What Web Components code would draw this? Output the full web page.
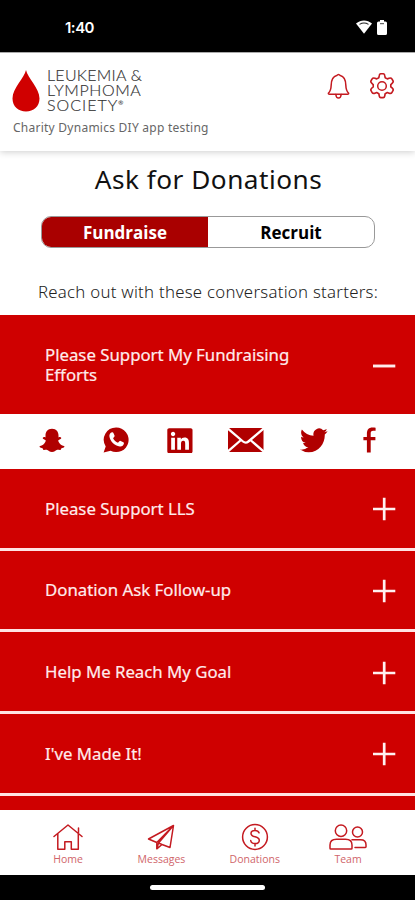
<!DOCTYPE html>
<html lang="en"><head><meta charset="utf-8"><title>Ask for Donations</title>
<style>
html,body{margin:0;padding:0;background:#fff}
body{width:415px;height:900px;overflow:hidden;font-family:"Noto Sans","Open Sans",sans-serif}
</style></head><body>
<donation-app></donation-app>
<script>
const define=(name,html)=>customElements.define(name,class extends HTMLElement{
  constructor(){super();this.attachShadow({mode:'open'}).innerHTML=html;}
});
const line='fill="none" stroke="#c41a20" stroke-width="1.5" stroke-linejoin="round" stroke-linecap="round"';
const icons={
drop:[28,42,'<path fill="#d00000" d="M14 0C15.500 8 27.500 18 27.500 28.500C27.500 36.500 21.500 41.500 14 41.500S.5 36.500.5 28.500C.5 18 12.500 8 14 0Z"/>'],
wifi:[16,14,'<path fill="#fff" d="M0 3.500C5-.5 11-.5 16 3.500L8 13.800Z"/><path d="M3.500 4.400Q8 1.700 12.500 4.400" fill="none" stroke="#222" stroke-width="1.100"/>'],
battery:[10,15,'<path fill="#fff" d="M3 0h4v1.500h1.500q1.500 0 1.500 1.500v10.500q0 1.500-1.500 1.500h-7Q0 15 0 13.500V3q0-1.500 1.500-1.500H3Z"/><path d="M3 3.700h4" stroke="#444" stroke-width="1"/>'],
bell:[23,26,`<g ${line}><path d="M1.300 20.300Q4 17.800 4.200 12C4.400 6.500 6.500 3.400 9.700 2.600Q11.500.2 13.300 2.600C16.500 3.400 18.600 6.500 18.800 12Q19 17.800 21.700 20.300Q21.700 21.300 20.700 21.300H2.300Q1.300 21.300 1.300 20.300Z"/><path d="M8.800 21.500Q9.200 25 11.500 25T14.200 21.500"/></g>`],
gear:[26,26,`<g ${line}><path d="M10.400 3Q10.600 1 12 1h2q1.400 0 1.600 2l.3 1.600 2 1.100 1.600-.6q1.900-.6 2.600.6l1 1.700q.7 1.200-.8 2.500l-1.200 1v2.200l1.200 1q1.500 1.300.8 2.500l-1 1.700q-.7 1.200-2.600.6l-1.600-.6-2 1.100-.3 1.600q-.2 2-1.600 2h-2q-1.400 0-1.600-2l-.3-1.600-2-1.100-1.600.6q-1.900.6-2.600-.6l-1-1.700q-.7-1.200.8-2.500l1.200-1v-2.200l-1.200-1q-1.500-1.300-.8-2.500l1-1.700q.7-1.200 2.600-.6l1.600.6 2-1.100Z" transform="translate(-1.100 -.3) scale(1.085)"/><circle cx="13" cy="13" r="4.300"/></g>`],
snap:[26,25,'<path fill="#b00000" d="M13 .8c4.500 0 6.500 3.200 6.500 6.600v2c1-.4 2.300-.5 2.700.3.500 1-1.300 1.600-2.500 2.300-.6.400-.5 1 0 2 1.200 2.200 3 3.500 5.200 4 .8.200.8 1-.1 1.400-1 .5-2.100.7-2.500 1-.5.400-.2 1.300-.9 1.500-1 .2-2.300-.4-3.700 0-1.300.4-2.300 2-4.700 2s-3.400-1.600-4.700-2c-1.400-.4-2.700.2-3.700 0-.7-.2-.4-1.100-.9-1.500-.4-.3-1.500-.5-2.500-1-.9-.4-.9-1.200-.1-1.400 2.200-.5 4-1.800 5.200-4 .5-1 .6-1.600 0-2-1.200-.7-3-1.300-2.500-2.300.4-.8 1.700-.7 2.700-.3v-2C6.500 4 8.500.8 13 .8Z"/>'],
whatsapp:[26,26,'<path fill="#b00000" d="M13.200.5a12.300 12.300 0 1 1-5.600 23.200L.6 25.500l2.100-6.100A12.300 12.300 0 0 1 13.200.5Z"/><path fill="#fff" transform="translate(3.200 2.300) scale(.86)" d="M6.800 3.500q1-.5 1.600.7l1.300 3q.3.900-.3 1.500L8 10.300c1.200 2.400 3.200 4.300 5.700 5.400l1.600-1.800q.7-.8 1.500-.3l3.100 1.500q1 .5.700 1.500c-.5 2.400-2.500 3.700-4.700 3.400C9.600 19.200 4.400 14 3.700 8.200 3.500 6 4.700 4.200 6.800 3.500Z"/>'],
linkedin:[26,25,'<path fill="#b00000" transform="translate(.3 -1.600) scale(.0563)" d="M416 32H31.900C14.300 32 0 46.500 0 64.300v383.400C0 465.500 14.300 480 31.900 480H416c17.600 0 32-14.500 32-32.300V64.300c0-17.800-14.400-32.300-32-32.300zM135.400 416H69V202.200h66.500V416zm-33.200-243c-21.300 0-38.500-17.300-38.500-38.500S80.900 96 102.200 96c21.200 0 38.500 17.300 38.500 38.500 0 21.300-17.200 38.500-38.500 38.500zm282.100 243h-66.400V312c0-24.800-.5-56.700-34.500-56.700-34.600 0-39.900 27-39.900 54.900V416h-66.400V202.200h63.700v29.200h.9c8.900-16.800 30.600-34.500 62.900-34.500 67.200 0 79.700 44.300 79.700 101.900V416z"/>'],
mail:[36,24,'<path fill="#b00000" d="M0 0h35.500v24H0Z"/><path d="M-.5 .2L15 13.500Q17.700 15.800 20.400 13.500L36 .2M-.5 23.800L13 12M36 23.800L22.400 12" fill="none" stroke="#fff" stroke-width="2.300"/>'],
twitter:[28,25,'<path fill="#b00000" transform="translate(0 -2.300) scale(1.150 1.220)" d="M23.953 4.570a10 10 0 01-2.825.775 4.958 4.958 0 002.163-2.723c-.951.555-2.005.959-3.127 1.184a4.920 4.920 0 00-8.384 4.482C7.690 8.095 4.067 6.130 1.640 3.162a4.822 4.822 0 00-.666 2.475c0 1.710.87 3.213 2.188 4.096a4.904 4.904 0 01-2.228-.616v.06a4.923 4.923 0 003.946 4.827 4.996 4.996 0 01-2.212.085 4.936 4.936 0 004.604 3.417 9.867 9.867 0 01-6.102 2.105c-.39 0-.779-.023-1.170-.067a13.995 13.995 0 007.557 2.209c9.053 0 13.998-7.496 13.998-13.985 0-.21 0-.42-.015-.63A9.935 9.935 0 0024 4.590z"/>'],
facebook:[13,26,'<path fill="#b00000" d="M3.900 25.500V13.200H.4V10h3.500V6.600C3.900 2.500 6 .5 9.300.5c1.500 0 2.500.1 3.300.3v3H10.200c-1.900 0-2.500 1-2.500 2.700V10h4.700v3.200H7.700v12.300Z"/>'],
plus:[24,24,'<path d="M1 12h22.300M12.200 .8v22.500" stroke="#fff1f1" stroke-width="2.700"/>'],
minus:[24,24,'<path d="M1 12h22.300" stroke="#ffecec" stroke-width="2.900"/>'],
home:[30,26,`<g ${line}><path d="M1 12.500L15 1l14 11.500M4.800 9.800v15.400h7v-7.500h6.500v7.500h7V9.800M25.500 4v4.500"/></g>`],
messages:[28,26,`<g ${line}><path d="M1.500 15L26.500 1.500 23 23.500 15 20.500 9.800 24.800V18.500ZM9.800 18.500L26.500 1.500 11.500 19 15 20.500M11.500 19L9.800 24.800"/></g>`],
donations:[28,28,`<g ${line}><circle cx="14" cy="14" r="12.400"/><path d="M18 9.800C17.500 8 16 7.400 14 7.400c-2.300 0-4 1.200-4 3 0 4.500 8.300 2.300 8.300 6.800 0 2.200-1.800 3.400-4.300 3.400S10 19.700 9.700 17.500M14 5.300v2.100M14 20.600v2.300"/></g>`],
team:[38,26,`<g ${line}><circle cx="12" cy="6.800" r="5.700"/><circle cx="28.500" cy="8" r="5"/><path d="M1 24.200V21C1 17 4 15.300 7.500 15.300h9c3.500 0 6.500 1.700 6.500 5.700v3.200q0 .8-.8.800H1.800Q1 25 1 24.200ZM23 15.800h8.500c3 0 5.500 1.700 5.500 5v2q0 .7-.7.700H26"/></g>`]
};
customElements.define('app-icon',class extends HTMLElement{
  connectedCallback(){const [w,h,p]=icons[this.getAttribute('name')];
  if(!this.shadowRoot)this.attachShadow({mode:'open'}).innerHTML=`<style>:host{display:block;flex:none;width:${w}px;height:${h}px}svg{display:block}</style><svg width="${w}" height="${h}" viewBox="0 0 ${w} ${h}">${p}</svg>`;}
});
define('status-bar',`<style>:host{display:flex;box-sizing:border-box;height:52px;background:#000;padding:20px 28px 0 65px;align-items:flex-start;color:#fff}
span{font:600 15px/16px Inter,sans-serif;letter-spacing:-.5px;flex:1}app-icon+app-icon{margin-left:5px}</style>
<span>1:40</span><app-icon name="wifi"></app-icon><app-icon name="battery"></app-icon>`);
define('app-header',`<style>:host{display:flex;box-sizing:border-box;height:99px;border-top:1px solid #aaa;padding:15px 20px 0 12px;background:#fff;box-shadow:0 1px 7px #0003;position:relative}
.brand{flex:1}.logo{display:flex;gap:7px;padding-top:2px;height:50px;box-sizing:border-box}
.logo div{font:300 16px/15px Lato,sans-serif;color:#333;margin-top:-3px;white-space:nowrap;-webkit-text-stroke:.15px #333}
.logo span{display:block}.a{letter-spacing:.25px}.b{letter-spacing:.6px}.c{letter-spacing:1px}sup{font-size:6px;line-height:0;vertical-align:6px;letter-spacing:0}
p{margin:0;font:400 12px/16px "Noto Sans";color:#666;padding:2px 0 0 1px;white-space:nowrap;letter-spacing:.25px}
nav{display:flex;gap:19px;padding-top:5px}</style>
<div class="brand"><div class="logo"><app-icon name="drop"></app-icon><div><span class="a">LEUKEMIA &amp;</span><span class="b">LYMPHOMA</span><span class="c">SOCIETY<sup>®</sup></span></div></div><p>Charity Dynamics DIY app testing</p></div>
<nav><app-icon name="bell"></app-icon><app-icon name="gear"></app-icon></nav>`);
define('toggle-tabs',`<style>:host{display:grid;grid-template-columns:1fr 1fr;box-sizing:border-box;width:334px;height:32px;margin:0 auto;border:1px solid #999;border-radius:10px;overflow:hidden;text-align:center;font:700 17px/31px "Open Sans"}
::slotted(*){padding-left:1px}::slotted(:first-child){background:#a90000;color:#fff}</style><slot></slot>`);
define('share-row',`<style>:host{display:flex;align-items:center;box-sizing:border-box;height:55px;padding:0 0 3px 39px;background:#fff}
app-icon:nth-of-type(2){margin-left:38px}app-icon:nth-of-type(3){margin-left:38px}app-icon:nth-of-type(4){margin-left:35px}app-icon:nth-of-type(5){margin-left:36px}app-icon:nth-of-type(6){margin-left:35px}</style>
<app-icon name="snap"></app-icon><app-icon name="whatsapp"></app-icon><app-icon name="linkedin"></app-icon><app-icon name="mail"></app-icon><app-icon name="twitter"></app-icon><app-icon name="facebook"></app-icon>`);
customElements.define('starter-item',class extends HTMLElement{
  connectedCallback(){const open=this.hasAttribute('open');this.attachShadow({mode:'open'}).innerHTML=`<style>:host{display:block;flex:none}
.row{display:flex;align-items:center;box-sizing:border-box;height:${open?'99':'78.7'}px;padding:${open?'3px':'2px'} 19px 0 45px;background:#cf0000;color:#ffecec;font:400 16.800px/20px "Noto Sans";-webkit-text-stroke:.2px #ffecec}
.t{flex:1;margin-top:-1.500px}.t div{width:260px}</style><div class="row"><div class="t"><div><slot></slot></div></div><app-icon name="${open?'minus':'plus'}"></app-icon></div>${open?'<share-row></share-row>':''}`;}
});
define('starter-list',`<style>:host{display:flex;flex-direction:column;background:#ffe3e3;height:495px;overflow:hidden}
::slotted(starter-item:nth-child(n+3)){margin-top:3px}</style><slot></slot>`);
customElements.define('nav-item',class extends HTMLElement{
  connectedCallback(){this.attachShadow({mode:'open'}).innerHTML=`<style>:host{display:flex;flex-direction:column;align-items:center;width:93.300px;color:#d0656a;font:400 10.500px/14px "Open Sans"}
.i{height:28px;display:flex;align-items:center;margin-bottom:1px}</style><div class="i"><app-icon name="${this.getAttribute('icon')}"></app-icon></div><slot></slot>`;}
});
define('tab-bar',`<style>:host{display:flex;box-sizing:border-box;height:65px;padding:13px 0 0 21.500px;background:#fff}</style>
<nav-item icon="home">Home</nav-item><nav-item icon="messages">Messages</nav-item><nav-item icon="donations">Donations</nav-item><nav-item icon="team">Team</nav-item>`);
define('home-bar',`<style>:host{display:flex;justify-content:center;box-sizing:border-box;height:25px;background:#000;padding-top:10px}i{width:115px;height:5px;border-radius:3px;background:#fff}</style><i></i>`);
define('donation-app',`<style>:host{display:flex;flex-direction:column;width:415px;height:900px;background:#fff}
main{height:164px;text-align:center;box-sizing:border-box;padding-top:10px}
h1{font:400 26.200px/36px "Noto Sans";margin:0 0 19px;padding-left:2px;color:#111;letter-spacing:.5px}
p{font:300 16.800px/22px "Noto Sans";margin:33px 0 0;color:#222;white-space:nowrap;letter-spacing:.27px;padding-left:1px}</style>
<status-bar></status-bar><app-header></app-header>
<main><h1>Ask for Donations</h1><toggle-tabs><div>Fundraise</div><div>Recruit</div></toggle-tabs><p>Reach out with these conversation starters:</p></main>
<starter-list><starter-item open>Please Support My Fundraising Efforts</starter-item><starter-item>Please Support LLS</starter-item><starter-item>Donation Ask Follow-up</starter-item><starter-item>Help Me Reach My Goal</starter-item><starter-item>I've Made It!</starter-item><starter-item></starter-item></starter-list>
<tab-bar></tab-bar><home-bar></home-bar>`);
</script></body></html>
